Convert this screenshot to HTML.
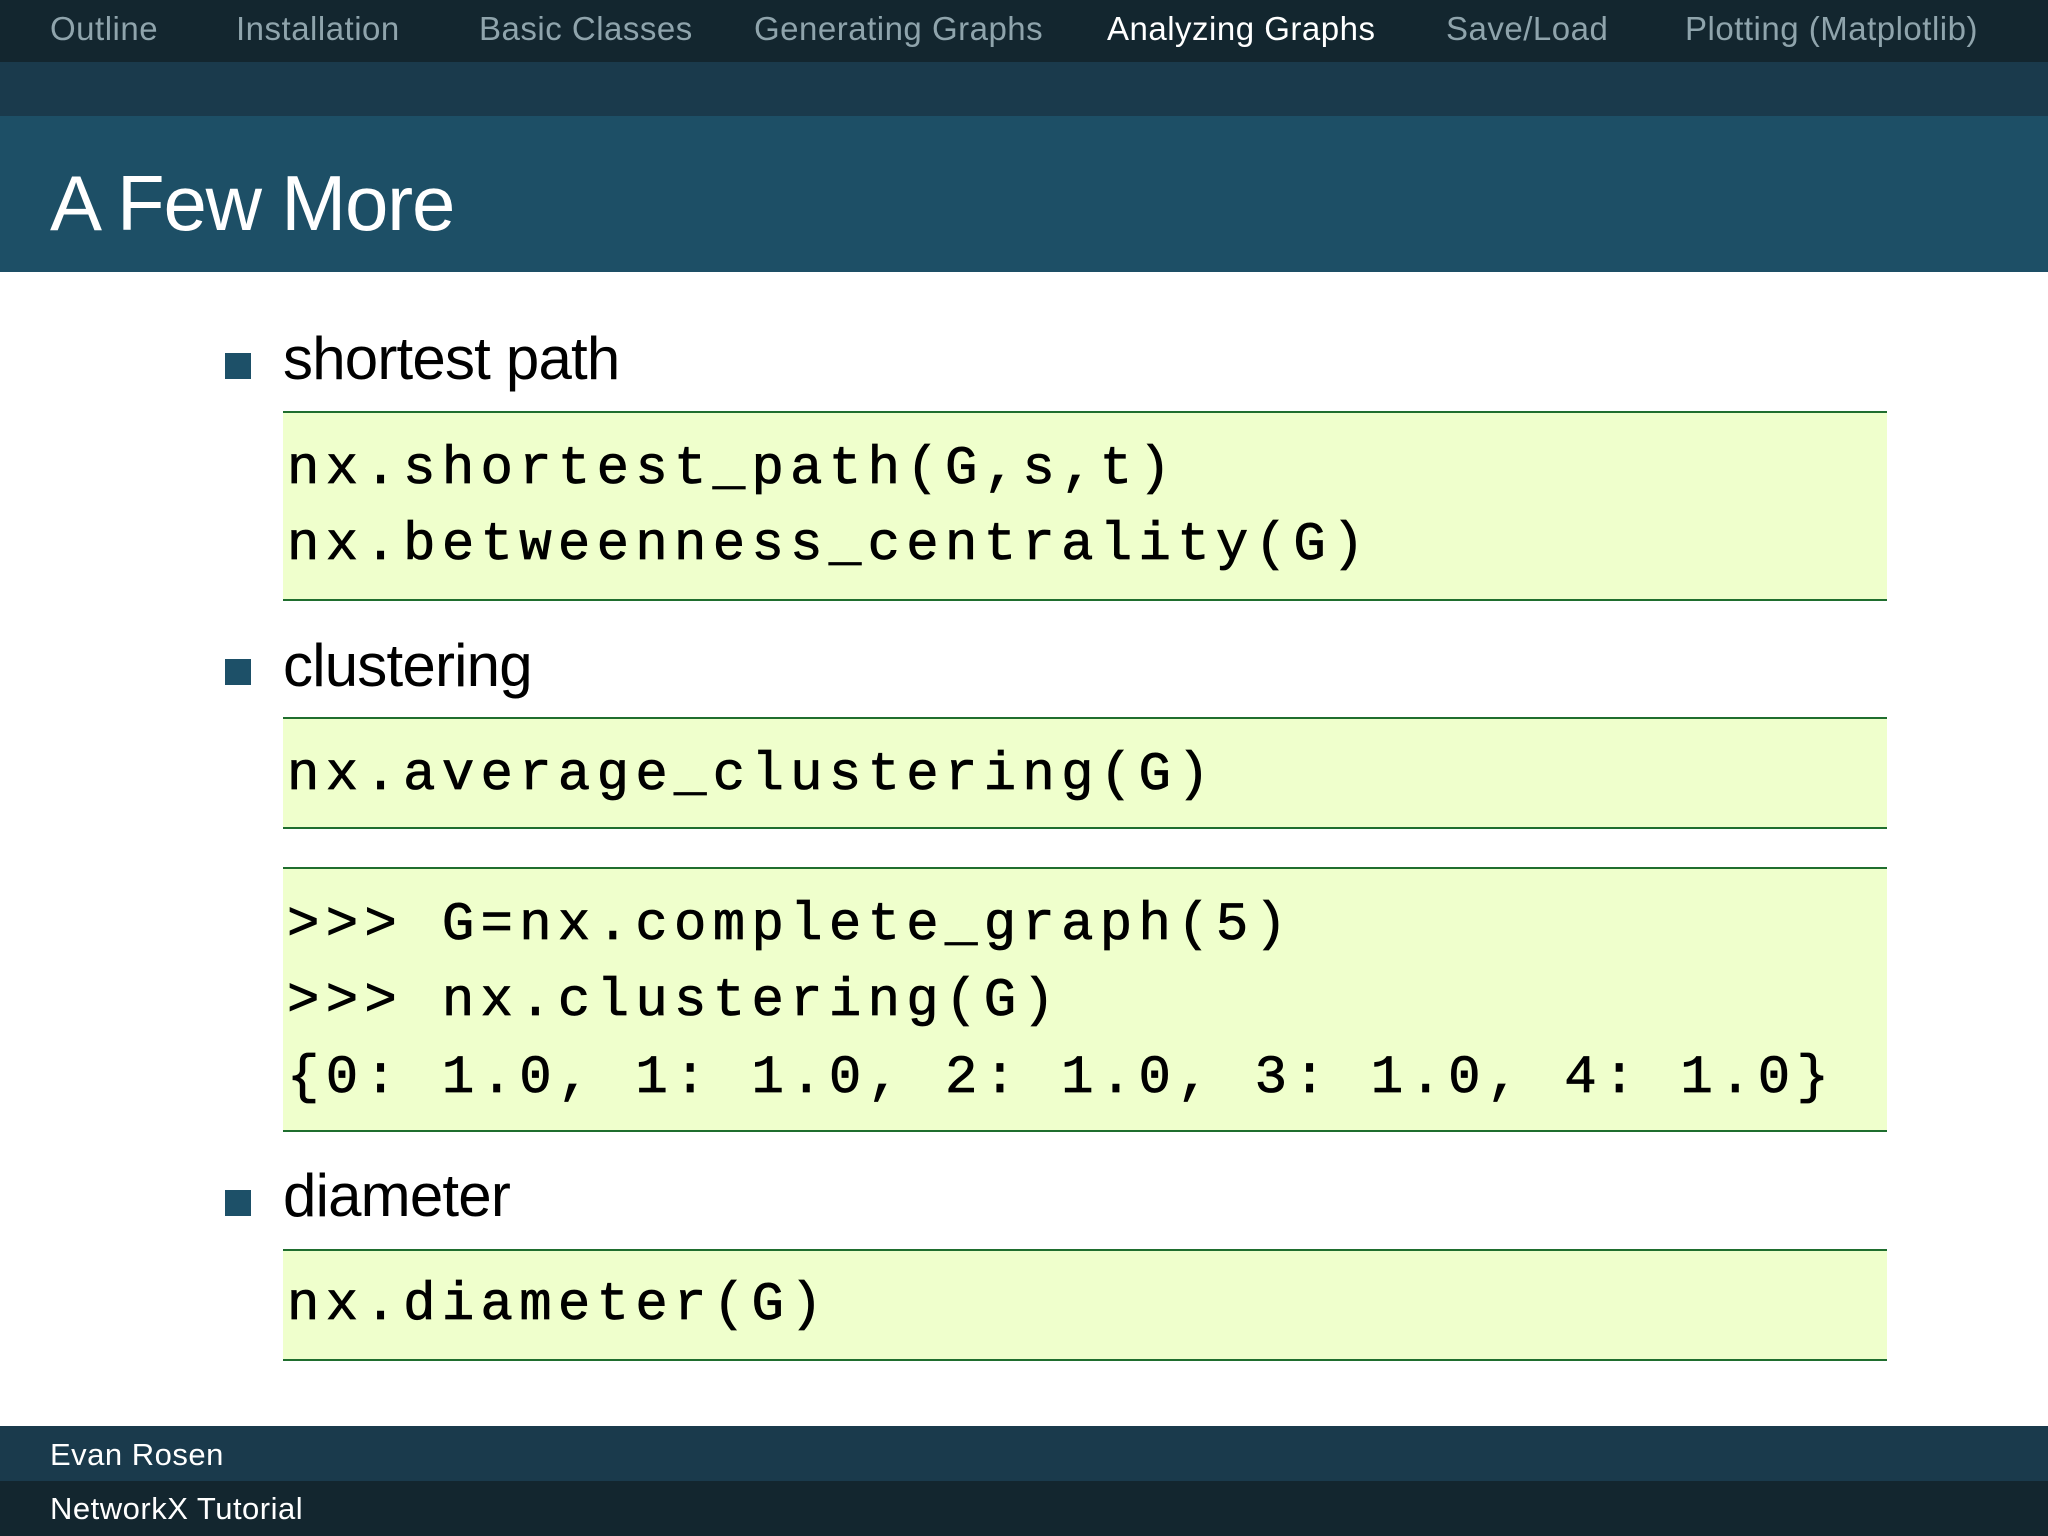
<!DOCTYPE html>
<html><head><meta charset="utf-8"><style>
body{margin:0;width:2048px;height:1536px;position:relative;overflow:hidden;background:#fff;font-family:"Liberation Sans",sans-serif}
.a{position:absolute;white-space:pre;line-height:1}
.nav{font-size:33px;color:#8fa4ac;top:12px;letter-spacing:0.5px}
.bar{position:absolute;left:0;width:2048px}
.sq{position:absolute;left:225px;width:26px;height:26px;background:#1d5068}
.bt{font-size:60px;left:283px;color:#000;letter-spacing:-0.8px}
.box{position:absolute;left:283px;width:1604px;background:#efffcc;border-top:2px solid #1f6e2e;border-bottom:2px solid #1f6e2e;box-sizing:border-box}
.c{font-family:"Liberation Mono",monospace;font-size:54px;letter-spacing:6.3px;left:287px;color:#000;-webkit-text-stroke:0.8px #000}
</style></head><body>
<div class="bar" style="top:0;height:62px;background:#13262f"></div>
<div class="bar" style="top:62px;height:54px;background:#1a3a4c"></div>
<div class="bar" style="top:116px;height:156px;background:#1d4f66"></div>
<div class="a nav" style="left:50px">Outline</div>
<div class="a nav" style="left:236px">Installation</div>
<div class="a nav" style="left:479px">Basic Classes</div>
<div class="a nav" style="left:754px">Generating Graphs</div>
<div class="a nav" style="left:1107px;color:#fff">Analyzing Graphs</div>
<div class="a nav" style="left:1446px">Save/Load</div>
<div class="a nav" style="left:1685px">Plotting (Matplotlib)</div>
<div class="a" style="left:50px;top:164px;font-size:78px;color:#fff;letter-spacing:-1.2px">A Few More</div>

<div class="sq" style="top:353px"></div>
<div class="a bt" style="top:329px">shortest path</div>
<div class="box" style="top:411px;height:190px"></div>
<div class="a c" style="top:443px">nx.shortest_path(G,s,t)</div>
<div class="a c" style="top:519px">nx.betweenness_centrality(G)</div>

<div class="sq" style="top:659px"></div>
<div class="a bt" style="top:636px">clustering</div>
<div class="box" style="top:717px;height:112px"></div>
<div class="a c" style="top:749px">nx.average_clustering(G)</div>

<div class="box" style="top:867px;height:265px"></div>
<div class="a c" style="top:899px">&gt;&gt;&gt; G=nx.complete_graph(5)</div>
<div class="a c" style="top:975px">&gt;&gt;&gt; nx.clustering(G)</div>
<div class="a c" style="top:1052px">{0: 1.0, 1: 1.0, 2: 1.0, 3: 1.0, 4: 1.0}</div>

<div class="sq" style="top:1190px"></div>
<div class="a bt" style="top:1166px">diameter</div>
<div class="box" style="top:1249px;height:112px"></div>
<div class="a c" style="top:1279px">nx.diameter(G)</div>

<div class="bar" style="top:1426px;height:55px;background:#1a3a4c"></div>
<div class="bar" style="top:1481px;height:55px;background:#13262f"></div>
<div class="a" style="left:50px;top:1439px;font-size:31px;color:#fff;letter-spacing:0.5px">Evan Rosen</div>
<div class="a" style="left:50px;top:1493px;font-size:31px;color:#fff;letter-spacing:0.5px">NetworkX Tutorial</div>
</body></html>
